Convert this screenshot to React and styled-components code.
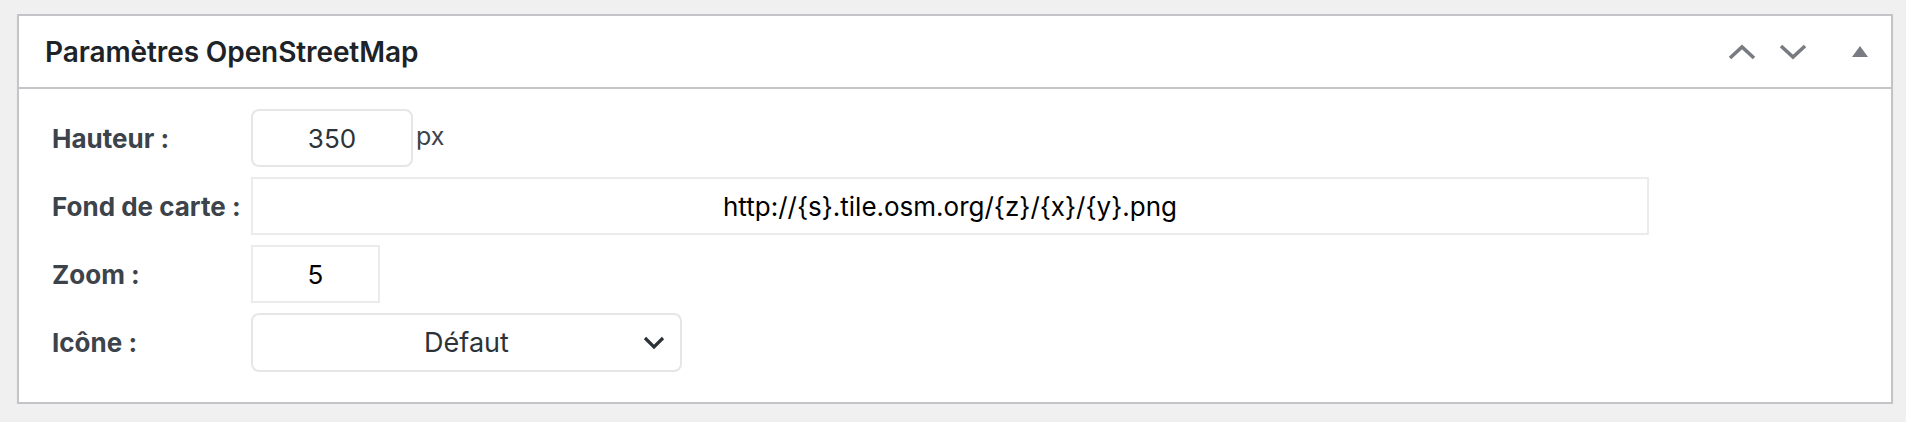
import React from 'react';
import styled, { createGlobalStyle } from 'styled-components';

const GlobalStyle = createGlobalStyle`
  body {
    margin: 0;
    background: #f0f0f1;
    font-family: Inter, "Noto Sans", sans-serif;
  }
`;

const Page = styled.div`
  padding: 14px 13px 0 17px;
`;

const Postbox = styled.div`
  background: #fff;
  border: 2px solid #c3c4c7;
  box-shadow: 0 2px 2px rgba(0, 0, 0, 0.04);
`;

const Header = styled.div`
  display: flex;
  align-items: center;
  justify-content: space-between;
  height: 71px;
  border-bottom: 2px solid #c3c4c7;
  padding: 0 3px 0 26px;
`;

const Title = styled.h2`
  margin: 0;
  font-size: 28px;
  font-weight: 600;
  color: #1d2327;
  letter-spacing: -0.1px;
`;

const Actions = styled.div`
  display: flex;
  align-items: center;
`;

const ActionButton = styled.button`
  display: flex;
  align-items: center;
  justify-content: center;
  width: ${(p) => p.$w || 51}px;
  height: 40px;
  padding: 0;
  border: 0;
  background: none;
  color: #787c82;
`;

const Body = styled.div`
  display: grid;
  grid-template-columns: 199px auto;
  row-gap: 10px;
  align-items: center;
  padding: 20px 33px 30px;
`;

const Label = styled.label`
  font-size: 26px;
  font-weight: 700;
  color: #3c434a;
`;

const Field = styled.div`
  display: flex;
  align-items: flex-start;
`;

const Input = styled.input`
  box-sizing: border-box;
  width: ${(p) => p.$w}px;
  height: 58px;
  border: 2px solid ${(p) => (p.$rounded ? '#e6e6e6' : '#ebebeb')};
  border-radius: ${(p) => (p.$rounded ? '8px' : '0')};
  background: #fff;
  font-family: Inter, "Noto Sans", sans-serif;
  font-size: 26px;
  color: ${(p) => (p.$rounded ? '#2c3338' : '#000')};
  text-align: center;
  outline: none;
`;

const Unit = styled.span`
  font-size: 25px;
  color: #3c434a;
  margin: 12px 0 0 3px;
`;

const SelectBox = styled.div`
  box-sizing: border-box;
  position: relative;
  display: flex;
  align-items: center;
  justify-content: center;
  width: 431px;
  height: 59px;
  border: 2px solid #e6e6e6;
  border-radius: 8px;
  font-size: 27px;
  color: #2c3338;
`;

const Caret = styled.svg`
  position: absolute;
  right: 15px;
  top: 50%;
  transform: translateY(-50%);
`;

const Chevron = ({ up }) => (
  <svg width="28" height="16" viewBox="0 0 28 16">
    <path
      d={up ? 'M2 14 L14 3 L26 14' : 'M2 2 L14 13 L26 2'}
      fill="none"
      stroke="currentColor"
      strokeWidth="3.6"
    />
  </svg>
);

const App = () => (
  <>
    <GlobalStyle />
    <Page>
      <Postbox>
        <Header>
          <Title>Paramètres OpenStreetMap</Title>
          <Actions>
            <ActionButton type="button" aria-label="Monter">
              <Chevron up />
            </ActionButton>
            <ActionButton type="button" aria-label="Descendre">
              <Chevron />
            </ActionButton>
            <ActionButton type="button" $w={70} aria-label="Replier">
              <svg width="16" height="11" viewBox="0 0 16 11" style={{ marginLeft: 14 }}>
                <path d="M8 0 L16 11 L0 11 Z" fill="currentColor" />
              </svg>
            </ActionButton>
          </Actions>
        </Header>
        <Body>
          <Label>Hauteur :</Label>
          <Field>
            <Input $w={162} $rounded defaultValue="350" />
            <Unit>px</Unit>
          </Field>
          <Label>Fond de carte :</Label>
          <Field>
            <Input $w={1398} defaultValue="http://{s}.tile.osm.org/{z}/{x}/{y}.png" />
          </Field>
          <Label>Zoom :</Label>
          <Field>
            <Input $w={129} defaultValue="5" />
          </Field>
          <Label>Icône :</Label>
          <Field>
            <SelectBox>
              Défaut
              <Caret width="22" height="14" viewBox="0 0 22 14">
                <path d="M2 2 L11 11 L20 2" fill="none" stroke="#2c3338" strokeWidth="3.2" />
              </Caret>
            </SelectBox>
          </Field>
        </Body>
      </Postbox>
    </Page>
  </>
);

export default App;
